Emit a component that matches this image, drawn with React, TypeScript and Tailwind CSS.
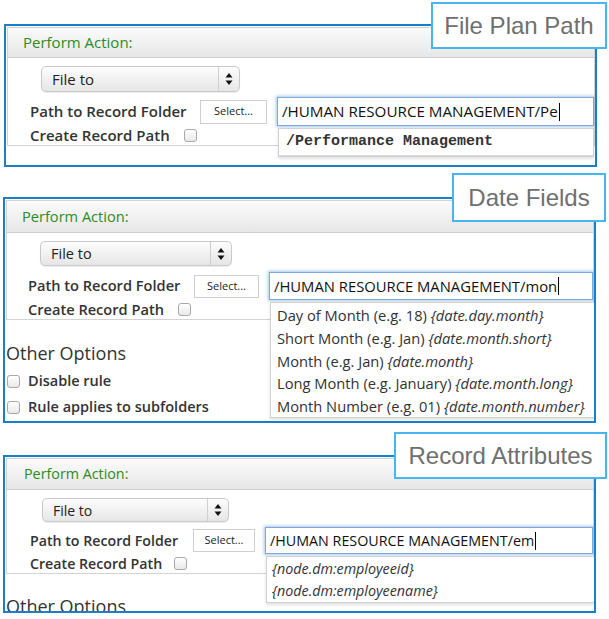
import type { ReactNode } from 'react';

type PanelCfg = {
  wrap: string;
  tag: string;
  tagText: string;
  header: string;
  select: string;
  selectText: string;
  row: string;
  rowLabel: string;
  button: string;
  input: string;
  inputText: string;
  value: string;
  createRow: string;
  createCheck: string;
  menu: string;
  menuItems: ReactNode;
  extra?: ReactNode;
};

const Checkbox = ({ className = '' }: { className?: string }) => (
  <span
    className={`inline-block w-[13px] h-[13px] rounded-[3px] border border-[#a9a9a9] bg-gradient-to-b from-white to-[#e9e9e9] shadow-[inset_0_1px_0_#fff] ${className}`}
  />
);

const SelectArrows = () => (
  <svg width="8" height="14" viewBox="0 0 8 14" className="block">
    <path d="M4 1 L7.5 5.5 L0.5 5.5 Z" fill="#111" />
    <path d="M4 13 L7.5 8.5 L0.5 8.5 Z" fill="#111" />
  </svg>
);

const Panel = ({ c }: { c: PanelCfg }) => (
  <div className={`relative shrink-0 border-2 border-[#1a7fc6] bg-white ${c.wrap}`}>
    <div className="h-full overflow-hidden">
      <div className="mt-px ml-px border border-[#d3d3d3]">
        <div
          className={`flex items-center border-b border-[#cfcfcf] bg-gradient-to-b from-[#fbfbfb] to-[#e7e7e7] text-[#2b8c25] ${c.header}`}
        >
          Perform Action:
        </div>
        <div className="pt-[8px] text-[#333]">
          <div
            className={`flex items-center rounded-[5px] border border-[#c9c9c9] bg-gradient-to-b from-[#fdfdfd] to-[#e6e6e6] shadow-[0_1px_1px_rgba(0,0,0,0.08)] ${c.select}`}
          >
            <span className={`flex-1 text-[#222] ${c.selectText}`}>File to</span>
            <span className="flex h-full w-[21px] items-center justify-center border-l border-[#cfcfcf]">
              <SelectArrows />
            </span>
          </div>
          <div className={`flex items-center ${c.row}`}>
            <span className={`whitespace-nowrap font-semibold ${c.rowLabel}`}>Path to Record Folder</span>
            <span
              className={`flex shrink-0 items-center justify-center border border-[#cfcfcf] bg-white text-[11px] text-[#222] ${c.button}`}
            >
              Select...
            </span>
            <div className={`relative ml-[10px] shrink-0 ${c.input}`}>
              <div className="flex h-full items-center border border-[#7ea9dc] bg-white pl-[4px] shadow-[0_0_3px_1px_rgba(96,152,214,0.55)]">
                <span className={`whitespace-nowrap text-[#111] ${c.inputText}`}>{c.value}</span>
                <span className="ml-px h-[18px] w-px bg-black" />
              </div>
              <div
                className={`absolute left-px top-full z-10 mt-[2px] border border-[#d2d2d2] bg-white shadow-[0_2px_3px_rgba(0,0,0,0.12)] ${c.menu}`}
              >
                {c.menuItems}
              </div>
            </div>
          </div>
          <div className={`flex items-center ${c.createRow}`}>
            <span className="whitespace-nowrap font-semibold">Create Record Path</span>
            <Checkbox className={c.createCheck} />
          </div>
        </div>
      </div>
      {c.extra}
    </div>
    <div
      className={`absolute z-20 flex items-center justify-center border-2 border-[#46b6f1] bg-white font-['Liberation_Sans',Arial,sans-serif] text-[#6f6f6f] ${c.tag}`}
    >
      {c.tagText}
    </div>
  </div>
);

const OptionRow = ({ label }: { label: string }) => (
  <div className="flex h-[26px] items-center">
    <Checkbox className="ml-px" />
    <span className="ml-[8px] text-[14.5px] font-semibold text-[#333]">{label}</span>
  </div>
);

const DateItem = ({ text, field }: { text: string; field: string }) => (
  <div className="flex h-[22.7px] items-center whitespace-nowrap pl-[6px] text-[14.7px] text-[#333]">
    {text}&nbsp;<i>{field}</i>
  </div>
);

const panels: PanelCfg[] = [
  {
    wrap: 'mt-[24px] ml-[4px] w-[593px] h-[143px]',
    tag: '-top-[24px] -right-[12px] w-[176px] h-[47px] text-[24px]',
    tagText: 'File Plan Path',
    header: 'h-[30px] pl-[15px] text-[15px]',
    select: 'ml-[33px] w-[199px] h-[26px]',
    selectText: 'pl-[10px] text-[15px]',
    row: 'mt-[5px] h-[29px] pl-[22px]',
    rowLabel: 'w-[172px] text-[15px]',
    button: 'w-[67px] h-[24px]',
    input: 'w-[317px] h-[29px]',
    inputText: 'text-[15.2px]',
    value: '/HUMAN RESOURCE MANAGEMENT/Pe',
    createRow: '-mt-px h-[20px] pl-[22px] text-[15px]',
    createCheck: 'ml-[14px]',
    menu: 'w-[316px] h-[29px]',
    menuItems: (
      <div className="flex h-full items-center border-b border-[#d8d8d8] pl-[7px] font-['Liberation_Mono','Courier_New',monospace] text-[15px] font-bold text-[#333]">
        /Performance Management
      </div>
    ),
  },
  {
    wrap: 'mt-[30px] ml-[3px] w-[593px] h-[226px]',
    tag: '-top-[26px] -right-[12px] w-[154px] h-[49px] text-[24px]',
    tagText: 'Date Fields',
    header: 'h-[32px] pl-[15px] text-[14.6px]',
    select: 'ml-[33px] w-[192px] h-[25px]',
    selectText: 'pl-[10px] text-[14.5px]',
    row: 'mt-[6px] h-[28px] pl-[21px]',
    rowLabel: 'w-[167px] text-[14.6px]',
    button: 'w-[65px] h-[23px]',
    input: 'w-[324px] h-[28px]',
    inputText: 'text-[14.8px]',
    value: '/HUMAN RESOURCE MANAGEMENT/mon',
    createRow: 'h-[19px] pl-[21px] text-[14.6px]',
    createCheck: 'ml-[14px]',
    menu: 'w-[325px] h-[116px] py-px',
    menuItems: (
      <>
        <DateItem text="Day of Month (e.g. 18)" field="{date.day.month}" />
        <DateItem text="Short Month (e.g. Jan)" field="{date.month.short}" />
        <DateItem text="Month (e.g. Jan)" field="{date.month}" />
        <DateItem text="Long Month (e.g. January)" field="{date.month.long}" />
        <DateItem text="Month Number (e.g. 01)" field="{date.month.number}" />
      </>
    ),
    extra: (
      <div className="pl-px">
        <div className="mt-[21px] h-[24px] text-[18px] leading-[24px] text-[#333]">Other Options</div>
        <div className="mt-[3px]">
          <OptionRow label="Disable rule" />
          <OptionRow label="Rule applies to subfolders" />
        </div>
      </div>
    ),
  },
  {
    wrap: 'mt-[32px] ml-[3px] w-[593px] h-[158px]',
    tag: '-top-[25px] -right-[13px] w-[213px] h-[47px] text-[24px]',
    tagText: 'Record Attributes',
    header: 'h-[31px] pl-[17px] text-[14.3px]',
    select: 'ml-[35px] w-[187px] h-[24px]',
    selectText: 'pl-[10px] text-[14px]',
    row: 'mt-[5px] h-[27px] pl-[23px]',
    rowLabel: 'w-[163px] text-[14.2px]',
    button: 'w-[62px] h-[23px]',
    input: 'w-[328px] h-[27px]',
    inputText: 'text-[14.3px]',
    value: '/HUMAN RESOURCE MANAGEMENT/em',
    createRow: 'h-[19px] pl-[23px] text-[14.2px]',
    createCheck: 'ml-[12px]',
    menu: 'w-[329px] h-[47px] py-px',
    menuItems: (
      <>
        <div className="flex h-[22px] items-center pl-[5px] text-[14.3px] italic text-[#333]">
          {'{node.dm:employeeid}'}
        </div>
        <div className="flex h-[22px] items-center pl-[5px] text-[14.3px] italic text-[#333]">
          {'{node.dm:employeename}'}
        </div>
      </>
    ),
    extra: (
      <div className="mt-[20px] h-[24px] pl-px text-[18px] leading-[24px] text-[#333]">Other Options</div>
    ),
  },
];

export default function App() {
  return (
    <div className="flex h-[619px] w-[609px] flex-col overflow-hidden bg-white font-['Open_Sans',sans-serif]">
      {panels.map((p) => (
        <Panel key={p.tagText} c={p} />
      ))}
    </div>
  );
}
